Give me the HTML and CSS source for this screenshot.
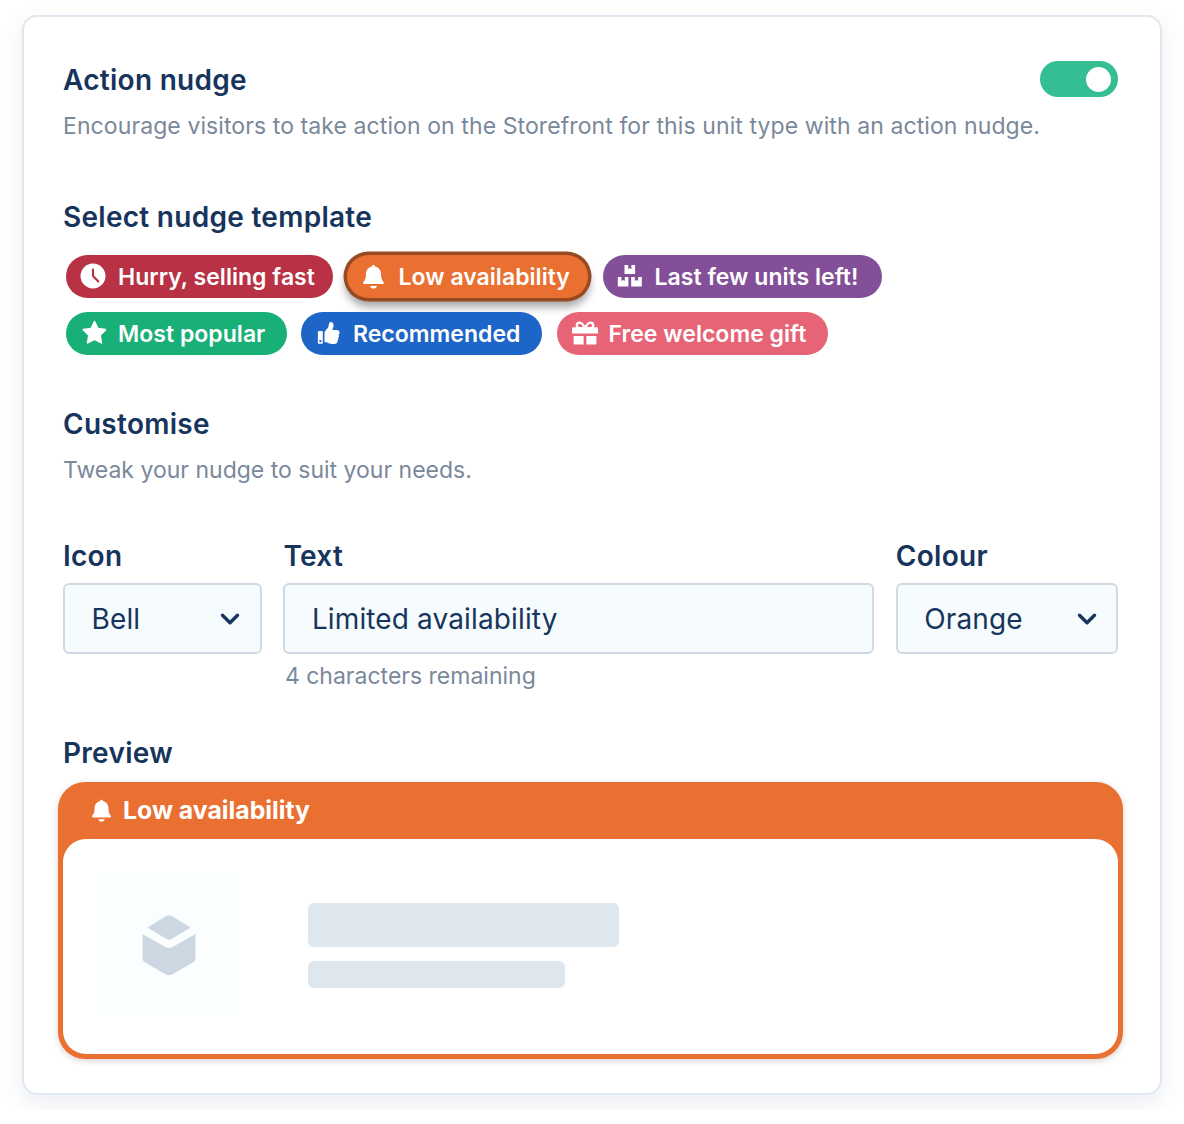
FILE: index.html
```html
<!DOCTYPE html>
<html lang="en">
<head>
  <meta charset="UTF-8" />
  <title>Action nudge</title>
  <link rel="stylesheet" href="styles.css">
</head>
<body>
  <div class="card">
    <div class="card-header">
      <h2>Action nudge</h2>
      <div class="toggle"><span class="knob"></span></div>
    </div>
    <p class="description">Encourage visitors to take action on the Storefront for this unit type with an action nudge.</p>

    <h2 class="templates-title">Select nudge template</h2>
    <div class="templates">
      <div class="pill-row">
        <div class="pill red">
          <svg viewBox="0 0 26 26"><circle cx="13" cy="13" r="12.5" fill="#fff"/><path d="M13 6.5V13l5.4 5.4" fill="none" stroke="#b93144" stroke-width="2.1" stroke-linecap="round" stroke-linejoin="round"/></svg>
          <span>Hurry, selling fast</span>
        </div>
        <div class="pill orange selected">
          <svg viewBox="0 0 26 26"><path fill="#fff" d="M12.5 2c1 0 1.5.6 1.5 1.5 3.9.8 6 3.800 6 7.500 0 4.200.8 6 2.600 8.200.6.800.1 1.800-.9 1.800H3.300c-1 0-1.500-1-.9-1.800C4.200 17 5 15.200 5 11c0-3.700 2.100-6.700 6-7.500C11 2.600 11.500 2 12.500 2zM9 23h7c-.4 1.500-1.700 2.600-3.500 2.600S9.400 24.500 9 23z"/></svg>
          <span>Low availability</span>
        </div>
        <div class="pill purple">
          <svg viewBox="0 0 26 26"><path fill="#fff" d="M7.500 2h3.700v4l1.600-.8 1.600.8V2h3.700v9H7.500zM.8 14h3.600v4l1.700-.9 1.700.9v-4h3.600v9.500H.8zM14.200 14h3.600v4l1.700-.9 1.700.9v-4h3.600v9.500H14.200z"/></svg>
          <span>Last few units left!</span>
        </div>
      </div>
      <div class="pill-row">
        <div class="pill green">
          <svg viewBox="0 0 26 26"><path fill="#fff" stroke="#fff" stroke-width="1.6" stroke-linejoin="round" d="M14.500 1.500l3.400 7 7.800 1.100-5.600 5.500 1.300 7.800-6.900-3.700-6.900 3.700 1.300-7.800-5.600-5.500 7.800-1.100z"/></svg>
          <span>Most popular</span>
        </div>
        <div class="pill blue">
          <svg viewBox="0 0 26 26"><path fill="#fff" fill-rule="evenodd" d="M3.700 11h3.300a.8.8 0 0 1 .8.800V23a.8.8 0 0 1-.8.800H3.700a.8.8 0 0 1-.8-.8V11.800a.8.8 0 0 1 .8-.8zM5.400 19.900a1.200 1.200 0 1 0 0 2.400 1.200 1.200 0 0 0 0-2.400z"/><path fill="#fff" d="M9.500 12.300c0-1 2.700-3.300 3.700-5.100.9-1.700.6-4.900 2.200-5.100 2-.2 3.200 1.300 3.200 3.400 0 1.800-.9 3.100-1.300 4.600h4.600c1.700 0 2.700 1.200 2.700 2.500 0 .9-.4 1.700-1 2.100.6 1.100.4 2.500-.4 3.300.3 1.100 0 2.200-.8 2.900.2 1.800-1.100 3-3.300 3-4.800.1-6.600-1.500-8.600-1.700-.6 0-1-.4-1-1z"/></svg>
          <span>Recommended</span>
        </div>
        <div class="pill pink">
          <svg class="gift" viewBox="0 0 28 26"><path fill="none" stroke="#fff" stroke-width="2.3" d="M14 8.500c-1.500-3.700-3-5.900-5.300-5.900A2.900 2.900 0 0 0 8.700 8.500zM14 8.500c1.500-3.700 3-5.900 5.300-5.900a2.900 2.900 0 0 1 0 5.900z"/><path fill="#fff" d="M2.300 7.300h23.400c.8 0 1.300.5 1.300 1.300v4.900H1V8.600c0-.8.500-1.300 1.300-1.300zM2.600 15.900h10v8.600H3.900c-.8 0-1.300-.5-1.300-1.300zM15.400 15.900h10v7.300c0 .8-.5 1.300-1.300 1.300h-8.700z"/></svg>
          <span>Free welcome gift</span>
        </div>
      </div>
    </div>

    <h2 class="customise-title">Customise</h2>
    <p class="tweak">Tweak your nudge to suit your needs.</p>

    <div class="fields">
      <div class="field">
        <h2>Icon</h2>
        <div class="control">
          <span>Bell</span>
          <svg class="chevron" viewBox="0 0 20 14"><path d="M2.500 3.300L10 10.800l7.500-7.500"/></svg>
        </div>
      </div>
      <div class="field">
        <h2>Text</h2>
        <div class="control"><span>Limited availability</span></div>
        <div class="hint">4 characters remaining</div>
      </div>
      <div class="field">
        <h2>Colour</h2>
        <div class="control colour-control">
          <span>Orange</span>
          <svg class="chevron" viewBox="0 0 20 14"><path d="M2.500 3.300L10 10.800l7.500-7.500"/></svg>
        </div>
      </div>
    </div>

    <h2 class="preview-title">Preview</h2>
    <div class="preview">
      <div class="preview-banner">
        <svg viewBox="0 0 26 26"><path fill="#fff" d="M12.5 2c1 0 1.5.6 1.5 1.5 3.9.8 6 3.800 6 7.500 0 4.200.8 6 2.600 8.200.6.800.1 1.800-.9 1.800H3.300c-1 0-1.500-1-.9-1.800C4.200 17 5 15.200 5 11c0-3.700 2.100-6.700 6-7.500C11 2.600 11.500 2 12.500 2zM9 23h7c-.4 1.500-1.700 2.600-3.500 2.600S9.400 24.500 9 23z"/></svg>
        <span>Low availability</span>
      </div>
      <div class="preview-body">
        <div class="thumb">
          <svg viewBox="0 0 54 62"><path d="M5.500 13.500L23.800 2.300q3.200-1.800 6.400 0L48.500 13.500 30 24.800q-3 1.700-6 0z"/><path d="M.5 20L23.500 33q3.500 1.800 7 0L53.500 20V44q0 3-2.600 4.600L30.500 60.200q-3.500 1.800-7 0L3.100 48.600Q.5 47 .5 44z"/></svg>
        </div>
        <div class="lines">
          <div class="line-big"></div>
          <div class="line-small"></div>
        </div>
      </div>
    </div>
  </div>
</body>
</html>
```
FILE: styles.css
```css
* {
  box-sizing: border-box;
}

body {
  margin: 0;
  padding: 15px 22px;
  font-family: "Inter", sans-serif;
  background-color: #fff;
  color: #17355c;
}

.card {
  height: 1080px;
  padding: 45px 42px 0 39px;
  border: 2px solid #e1e7ee;
  border-radius: 15px;
  background-color: #fff;
  box-shadow: 0 8px 24px rgba(30, 70, 120, 0.09);
}

h2 {
  margin: 0;
  font-size: 28px;
  line-height: 36px;
  font-weight: 600;
  letter-spacing: 0.28px;
  white-space: nowrap;
}

p {
  margin: 0;
  font-size: 23px;
  line-height: 32px;
  color: #7a889b;
  white-space: nowrap;
}

.card-header {
  display: flex;
  justify-content: space-between;
}

.toggle {
  display: flex;
  justify-content: flex-end;
  align-items: center;
  width: 78.5px;
  height: 36px;
  margin-top: -1px;
  padding-right: 7px;
  border-radius: 18px;
  background-color: #35bd93;
}

.knob {
  width: 25px;
  height: 25px;
  border-radius: 50%;
  background-color: #fff;
}

.description {
  margin-top: 12px;
  letter-spacing: 0.09px;
}

.templates-title {
  margin-top: 57px;
}

.templates {
  display: flex;
  flex-direction: column;
  gap: 14px;
  margin-top: 19.5px;
  padding-left: 3px;
}

.pill-row {
  display: flex;
  gap: 14.5px;
}

.pill {
  display: flex;
  flex: none;
  align-items: center;
  gap: 12px;
  height: 43px;
  padding-left: 14px;
  border-radius: 22px;
  color: #fff;
  font-size: 23px;
  line-height: 41px;
  font-weight: 600;
  letter-spacing: 0.03px;
  white-space: nowrap;
}

.pill span {
  padding-top: 2px;
}

.pill svg {
  width: 26px;
  height: 26px;
}

.pill .gift {
  width: 28px;
  margin-right: -2px;
}

.red { width: 266.5px; background-color: #b93144; }
.orange { width: 241.5px; background-color: #ea7032; }
.purple { width: 279px; background-color: #834f98; }
.green { width: 220.5px; background-color: #18b077; }
.blue { width: 241px; background-color: #1e65c8; }
.pink { width: 271.5px; background-color: #e76476; }

.selected {
  margin-left: -0.5px;
  box-shadow: 0 0 0 3.5px #974a22, 0 7px 8px 2px rgba(0, 0, 0, 0.35);
}

.customise-title {
  margin-top: 51.5px;
}

.tweak {
  margin-top: 12px;
}

.fields {
  display: grid;
  grid-template-columns: 199px 591px 222px;
  column-gap: 21.4px;
  margin-top: 52px;
}

.control {
  display: flex;
  align-items: center;
  justify-content: space-between;
  height: 71px;
  margin-top: 9px;
  padding: 0 20px 0 26.5px;
  border: 2px solid #cfd9e4;
  border-radius: 6px;
  background-color: #f6fbfd;
  font-size: 28px;
  letter-spacing: 0.13px;
}

.colour-control {
  padding-right: 19px;
}

.chevron {
  width: 20px;
  height: 14px;
  fill: none;
  stroke: #17355c;
  stroke-width: 3.4;
  stroke-linecap: round;
  stroke-linejoin: round;
}

.hint {
  margin-top: 6px;
  margin-bottom: 1px;
  padding-left: 1.5px;
  font-size: 23px;
  line-height: 32px;
  color: #7a889b;
}

.preview-title {
  margin-top: 42px;
}

.preview {
  height: 277px;
  margin: 11px -5px 0;
  padding: 0 5px 5px;
  border-radius: 27px;
  background-color: #ea7032;
  box-shadow: 0 2px 6px rgba(80, 40, 30, 0.2);
}

.preview-banner {
  display: flex;
  align-items: center;
  gap: 9.5px;
  height: 57px;
  padding: 0 0 2px 26.5px;
  color: #fff;
  font-size: 24.8px;
  font-weight: 700;
}

.preview-banner svg {
  width: 24px;
  height: 24px;
}

.preview-body {
  display: flex;
  align-items: center;
  height: 215px;
  padding: 0 0 3px 35px;
  border-radius: 23px;
  background-color: #fff;
}

.thumb {
  display: flex;
  align-items: center;
  justify-content: center;
  width: 142px;
  height: 142px;
  background-color: #fafeff;
}

.thumb svg {
  width: 54px;
  height: 62px;
  fill: #ccd7e2;
}

.lines {
  display: flex;
  flex-direction: column;
  gap: 14px;
  margin: 1px 0 0 68px;
}

.line-big {
  width: 311px;
  height: 44px;
  border-radius: 6px;
  background-color: #dee6ee;
}

.line-small {
  width: 257px;
  height: 27px;
  border-radius: 6px;
  background-color: #dee6ee;
}
```
